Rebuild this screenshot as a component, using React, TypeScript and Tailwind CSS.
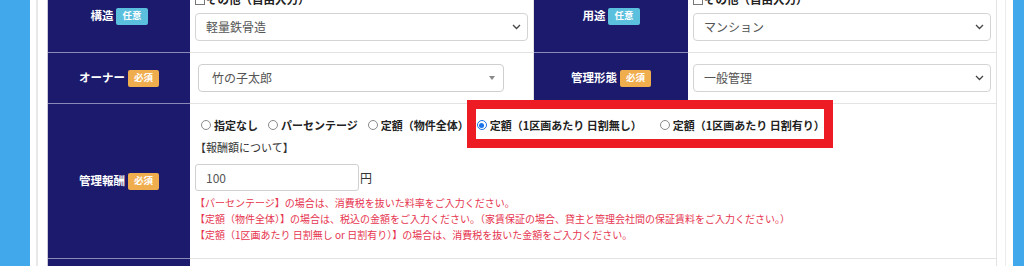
import type { ReactNode } from 'react';

function Badge({ kind }: { kind: 'opt' | 'req' }) {
  return (
    <span
      className={`ml-[3px] inline-flex h-[17px] items-center rounded-[2px] px-[6px] text-[9.5px] font-bold leading-none text-white ${
        kind === 'opt' ? 'bg-[#5bc0de]' : 'bg-[#f0ad4e]'
      }`}
    >
      {kind === 'opt' ? '任意' : '必須'}
    </span>
  );
}

function Label({ text, kind, last }: { text: string; kind: 'opt' | 'req'; last?: boolean }) {
  return (
    <div
      className={`flex items-center justify-center bg-[#1b1a6c] text-[11.5px] font-bold text-white ${
        last ? '' : 'border-b-[1.5px] border-[#8a89b8]'
      }`}
    >
      <span>{text}</span>
      <Badge kind={kind} />
    </div>
  );
}

function Chevron() {
  return (
    <svg width="9" height="6" viewBox="0 0 9 6" className="shrink-0">
      <path d="M1 1l3.5 3.5L8 1" fill="none" stroke="#444" strokeWidth="1.3" />
    </svg>
  );
}

function Select({ value, owner }: { value: string; owner?: boolean }) {
  if (owner) {
    return (
      <div className="ml-[8px] flex h-[28px] w-[306px] items-center justify-between rounded-[4px] border border-[#cfcfcf] pl-[13px] pr-[8px] text-[12px] text-[#555]">
        <span>{value}</span>
        <span className="h-0 w-0 border-x-[3.5px] border-t-[4px] border-x-transparent border-t-[#888]" />
      </div>
    );
  }
  return (
    <div className="flex h-[28px] items-center justify-between rounded-[4px] border border-[#d4d4d4] pl-[10px] pr-[6px] text-[12px] text-[#555]">
      <span>{value}</span>
      <Chevron />
    </div>
  );
}

function Check() {
  return (
    <div className="flex h-[16px] items-center text-[11.5px] font-bold text-[#222]">
      <span className="mr-[1px] h-[10px] w-[10px] border border-[#777] bg-white" />
      その他（自由入力）
    </div>
  );
}

function Radio({ label, checked, className = '' }: { label: ReactNode; checked?: boolean; className?: string }) {
  return (
    <span className={`inline-flex items-center ${className}`}>
      {checked ? (
        <span className="flex h-[10px] w-[10px] items-center justify-center rounded-full border border-[#1a73e8] bg-white">
          <span className="h-[5px] w-[5px] rounded-full bg-[#1a73e8]" />
        </span>
      ) : (
        <span className="h-[10px] w-[10px] rounded-full border border-[#8a8a8a] bg-white" />
      )}
      <span className="ml-[3px]">{label}</span>
    </span>
  );
}

export default function App() {
  return (
    <div className="relative flex h-[266px] w-[1024px] overflow-hidden bg-white font-['Noto_Sans_CJK_JP',sans-serif]">
      <div className="w-[30px] shrink-0 bg-[#42a8ec]" />
      <div className="w-[6px] shrink-0" />
      <div className="w-[2px] shrink-0 bg-[#e8e8e8]" />
      <div className="w-[9px] shrink-0" />

      {/* form table */}
      <div className="-mt-[20px] grid w-[949px] shrink-0 grid-cols-[142px_344px_154px_309px] grid-rows-[73px_51px_155px_40px] border-l border-[#c9c9d9]">
        {/* row 1 */}
        <Label text="構造" kind="opt" />
        <div className="border-b-[1.5px] border-r border-[#e3e3e3] px-[5px] pt-[12px]">
          <Check />
          <div className="mt-[5px]">
            <Select value="軽量鉄骨造" />
          </div>
        </div>
        <Label text="用途" kind="opt" />
        <div className="border-b-[1.5px] border-r border-[#e3e3e3] px-[5px] pt-[12px]">
          <Check />
          <div className="mt-[5px]">
            <Select value="マンション" />
          </div>
        </div>

        {/* row 2 */}
        <Label text="オーナー" kind="req" />
        <div className="flex items-center border-b-[1.5px] border-r border-[#e3e3e3]">
          <Select value="竹の子太郎" owner />
        </div>
        <Label text="管理形態" kind="req" />
        <div className="flex flex-col justify-center border-b-[1.5px] border-r border-[#e3e3e3] px-[5px]">
          <Select value="一般管理" />
        </div>

        {/* row 3 */}
        <Label text="管理報酬" kind="req" />
        <div className="col-span-3 border-b-[1.5px] border-r border-[#e3e3e3] pl-[5px] pt-[13px]">
          <div className="flex h-[16px] items-center pl-[6px] text-[11px] font-bold text-[#222]">
            <Radio label="指定なし" />
            <Radio label="パーセンテージ" className="ml-[10px]" />
            <Radio label="定額（物件全体）" className="ml-[10px]" />
            <Radio label="定額（1区画あたり 日割無し）" checked className="ml-[8px]" />
            <Radio label="定額（1区画あたり 日割有り）" className="ml-[18px]" />
          </div>
          <p className="mt-[6px] h-[16px] text-[11px] leading-[16px] text-[#333]">【報酬額について】</p>
          <div className="mt-[9px] flex items-center">
            <div className="flex h-[27px] w-[164px] items-center rounded-[3px] border border-[#d0d0d0] pl-[10px] text-[12px] text-[#555]">
              100
            </div>
            <span className="ml-[1px] text-[12px] text-[#333]">円</span>
          </div>
          <div className="mt-[4px] text-[10px] leading-[16px] text-[#e6354f]">
            <p>【パーセンテージ】の場合は、消費税を抜いた料率をご入力ください。</p>
            <p>【定額（物件全体）】の場合は、税込の金額をご入力ください。（家賃保証の場合、貸主と管理会社間の保証賃料をご入力ください。）</p>
            <p>【定額（1区画あたり 日割無し or 日割有り）】の場合は、消費税を抜いた金額をご入力ください。</p>
          </div>
        </div>

        {/* row 4 */}
        <div className="bg-[#1b1a6c]" />
        <div className="col-span-3 border-r border-[#e3e3e3]" />
      </div>

      <div className="w-[9px] shrink-0" />
      <div className="w-[1px] shrink-0 bg-[#ececec]" />
      <div className="w-[7px] shrink-0" />
      <div className="w-[11px] shrink-0 bg-[#42a8ec]" />

      {/* highlight annotation */}
      <div className="pointer-events-none absolute left-[467px] top-[100px] h-[48px] w-[366px] border-[9px] border-[#ed1c24]" />
    </div>
  );
}
